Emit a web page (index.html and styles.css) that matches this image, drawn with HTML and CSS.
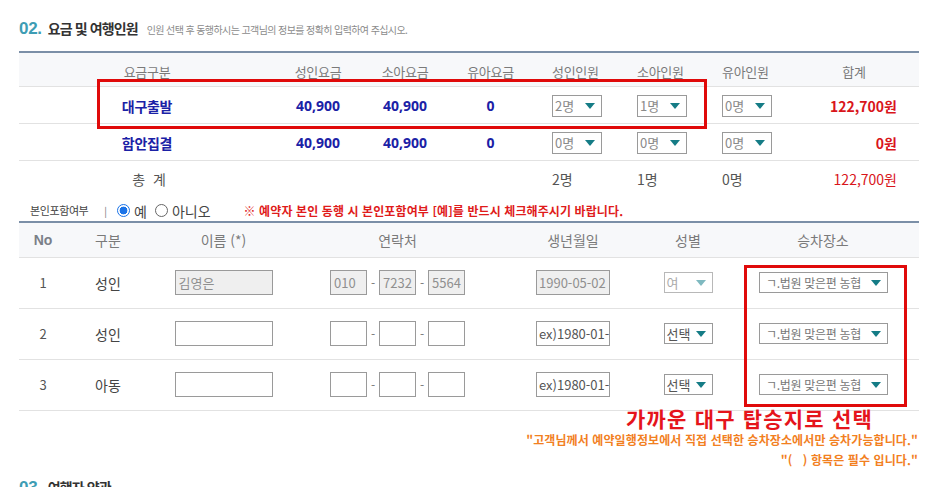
FILE: index.html
```html
<!DOCTYPE html>
<html lang="ko">
<head>
<meta charset="utf-8">
<title>요금 및 여행인원</title>
<link rel="stylesheet" href="styles.css">
</head>
<body>
<div class="page">
  <h2 class="sec-title"><span class="num">02.</span><span class="title">요금 및 여행인원</span><span class="sub">인원 선택 후 동행하시는 고객님의 정보를 정확히 입력하여 주십시오.</span></h2>

  <table class="fare">
    <colgroup>
      <col class="c1"><col class="c2"><col class="c3"><col class="c4"><col class="c5"><col class="c6"><col class="c7"><col class="c8">
    </colgroup>
    <thead>
      <tr>
        <th>요금구분</th><th>성인요금</th><th>소아요금</th><th>유아요금</th>
        <th class="lft">성인인원</th><th class="lft">소아인원</th><th class="lft">유아인원</th><th class="sum-h">합계</th>
      </tr>
    </thead>
    <tbody>
      <tr>
        <td class="name">대구출발</td><td class="price">40,900</td><td class="price">40,900</td><td class="price">0</td>
        <td class="lft"><div class="sel">2명<i class="tri"></i></div></td>
        <td class="lft"><div class="sel">1명<i class="tri"></i></div></td>
        <td class="lft"><div class="sel">0명<i class="tri"></i></div></td>
        <td class="total">122,700원</td>
      </tr>
      <tr>
        <td class="name">함안집결</td><td class="price">40,900</td><td class="price">40,900</td><td class="price">0</td>
        <td class="lft"><div class="sel">0명<i class="tri"></i></div></td>
        <td class="lft"><div class="sel">0명<i class="tri"></i></div></td>
        <td class="lft"><div class="sel">0명<i class="tri"></i></div></td>
        <td class="total">0원</td>
      </tr>
      <tr class="sumrow">
        <td class="sum-label">총 계</td><td></td><td></td><td></td>
        <td class="lft cnt">2명</td><td class="lft cnt">1명</td><td class="lft cnt">0명</td>
        <td class="total normal">122,700원</td>
      </tr>
    </tbody>
  </table>

  <div class="self-row">
    <span class="self-label">본인포함여부</span>
    <span class="bar">|</span>
    <label class="radio"><span class="rb on"></span>예</label>
    <label class="radio"><span class="rb"></span>아니오</label>
    <span class="warn">※ 예약자 본인 동행 시 본인포함여부 [예]를 반드시 체크해주시기 바랍니다.</span>
  </div>

  <table class="people">
    <colgroup>
      <col class="p1"><col class="p2"><col class="p3"><col class="p4"><col class="p5"><col class="p6"><col class="p7">
    </colgroup>
    <thead>
      <tr><th class="no">No</th><th>구분</th><th>이름 (*)</th><th>연락처</th><th>생년월일</th><th>성별</th><th>승차장소</th></tr>
    </thead>
    <tbody>
      <tr>
        <td>1</td><td class="kind">성인</td>
        <td><div class="inp name-inp dis">김영은</div></td>
        <td><div class="phone"><div class="inp ph dis">010</div><span class="dash">-</span><div class="inp ph dis">7232</div><span class="dash">-</span><div class="inp ph dis">5564</div></div></td>
        <td><div class="inp birth dis">1990-05-02</div></td>
        <td><div class="sel gender dis">여<i class="tri"></i></div></td>
        <td><div class="sel place">ㄱ.법원 맞은편 농협<i class="tri"></i></div></td>
      </tr>
      <tr>
        <td>2</td><td class="kind">성인</td>
        <td><div class="inp name-inp"></div></td>
        <td><div class="phone"><div class="inp ph"></div><span class="dash">-</span><div class="inp ph"></div><span class="dash">-</span><div class="inp ph"></div></div></td>
        <td><div class="inp birth">ex)1980-01-</div></td>
        <td><div class="sel gender">선택<i class="tri"></i></div></td>
        <td><div class="sel place">ㄱ.법원 맞은편 농협<i class="tri"></i></div></td>
      </tr>
      <tr>
        <td>3</td><td class="kind">아동</td>
        <td><div class="inp name-inp"></div></td>
        <td><div class="phone"><div class="inp ph"></div><span class="dash">-</span><div class="inp ph"></div><span class="dash">-</span><div class="inp ph"></div></div></td>
        <td><div class="inp birth">ex)1980-01-</div></td>
        <td><div class="sel gender">선택<i class="tri"></i></div></td>
        <td><div class="sel place">ㄱ.법원 맞은편 농협<i class="tri"></i></div></td>
      </tr>
    </tbody>
  </table>

  <div class="notes">
    <p class="note">"고객님께서 예약일행정보에서 직접 선택한 승차장소에서만 승차가능합니다."</p>
    <p class="note">"(&nbsp;&nbsp;&nbsp;) 항목은 필수 입니다."</p>
  </div>

  <h2 class="sec-title next"><span class="num">03.</span><span class="title">여행자 약관</span></h2>

  <div class="mark mark-1"></div>
  <div class="mark mark-2"></div>
  <div class="mark-text">가까운 대구 탑승지로 선택</div>
</div>
</body>
</html>
```

FILE: styles.css
```css
* { box-sizing: border-box; }
html, body { margin: 0; padding: 0; background: #fff; }
body {
  font-family: "Noto Sans CJK KR", "Noto Sans", sans-serif;
  color: #555;
  overflow: hidden;
}
.page {
  position: relative;
  width: 941px;
  height: 487px;
  padding: 0 22px 0 19px;
}

/* section title */
.sec-title {
  margin: 0;
  height: 51px;
  padding-top: 20px;
  display: flex;
  align-items: baseline;
  font-weight: normal;
  line-height: 1;
}
.sec-title .num {
  font-family: "Liberation Sans", sans-serif;
  font-weight: bold;
  font-size: 17px;
  color: #3e9db4;
  letter-spacing: -0.3px;
  margin-right: 6px;
}
.sec-title .title {
  font-weight: bold;
  font-size: 14px;
  color: #333;
  letter-spacing: -0.9px;
}
.sec-title .sub {
  margin-left: 9px;
  font-size: 10px;
  color: #8b8b8b;
  letter-spacing: -0.6px;
}
.sec-title.next { height: auto; padding-top: 0; margin-top: 13px; }

/* fare table */
table { border-collapse: collapse; width: 900px; table-layout: fixed; }
.fare { border-top: 2px solid #7b8fa7; }
.fare col.c1 { width: 256px; }
.fare col.c2 { width: 86px; }
.fare col.c3 { width: 88px; }
.fare col.c4 { width: 83px; }
.fare col.c5 { width: 85px; }
.fare col.c6 { width: 85px; }
.fare col.c7 { width: 95px; }
.fare col.c8 { width: 122px; }

.fare th {
  height: 34px;
  background: #f7f8fa;
  color: #7a7a7a;
  font-size: 13px;
  font-weight: normal;
  border-bottom: 1px solid #e2e2e2;
  padding: 4px 0 0;
  line-height: 1;
  letter-spacing: -0.3px;
}
.fare td {
  height: 37px;
  padding: 2px 0 0;
  text-align: center;
  font-size: 14px;
  line-height: 1;
  border-bottom: 1px solid #e2e2e2;
}
.fare th.lft, .fare td.lft { text-align: left; padding-left: 20px; }
.fare th.sum-h { padding-right: 8px; }
.fare td.name { font-weight: bold; color: #1b21a6; letter-spacing: -0.3px; }
.fare td.price { font-weight: bold; color: #1b21a6; font-family: "Noto Sans", sans-serif; }
.fare td.total {
  text-align: right;
  padding-right: 22px;
  font-weight: bold;
  color: #d9151b;
}
.fare td.total.normal { font-weight: normal; }
.fare tr.sumrow td { border-bottom: none; height: 36px; }
.fare td.sum-label { color: #555; letter-spacing: 2px; padding-left: 6px; }
.fare td.cnt { color: #555; }

/* fake selects */
.sel {
  position: relative;
  display: inline-flex;
  align-items: center;
  width: 50px;
  height: 22px;
  border: 1px solid #9a9a9a;
  background: #fff;
  padding-left: 2px;
  font-size: 13px;
  color: #8a8a8a;
  line-height: 1;
  vertical-align: middle;
}
.sel .tri {
  position: absolute;
  right: 6px;
  top: 50%;
  margin-top: -3px;
  width: 0; height: 0;
  border-left: 5px solid transparent;
  border-right: 5px solid transparent;
  border-top: 6px solid #157c86;
}

/* self include row */
.self-row {
  height: 25px;
  display: flex;
  align-items: center;
  padding-top: 4px;
  font-size: 13px;
  line-height: 1;
}
.self-label { font-size: 11px; color: #444; margin-left: 11px; letter-spacing: -0.4px; }
.bar { font-size: 10px; color: #777; margin: 0 10px 0 16px; }
.radio { display: inline-flex; align-items: center; color: #444; font-size: 14px; margin-right: 8px; }
.rb {
  width: 13px; height: 13px;
  border-radius: 50%;
  border: 1px solid #666;
  margin-right: 4px;
  background: #fff;
}
.rb.on {
  border: 1.5px solid #1a73e8;
  background: radial-gradient(circle, #1a73e8 0 3.6px, #fff 4.2px);
}
.warn {
  margin-left: 25px;
  color: #e01b1b;
  font-weight: bold;
  font-size: 12px;
  letter-spacing: 0.1px;
}

/* people table */
.people { border-top: 2px solid #7b8fa7; }
.people col.p1 { width: 48px; }
.people col.p2 { width: 82px; }
.people col.p3 { width: 149px; }
.people col.p4 { width: 199px; }
.people col.p5 { width: 152px; }
.people col.p6 { width: 78px; }
.people col.p7 { width: 192px; }
.people th {
  height: 35px;
  background: #f7f8fa;
  color: #7a7a7a;
  font-size: 14px;
  font-weight: normal;
  border-bottom: 1px solid #e2e2e2;
  padding: 0;
  line-height: 1;
}
.people th.no { font-weight: bold; font-family: "Liberation Sans", sans-serif; color: #7a7f88; }
.people td {
  height: 51px;
  padding: 0;
  text-align: center;
  font-size: 13px;
  color: #555;
  border-bottom: 1px solid #e2e2e2;
  line-height: 1;
}
.people td.kind { font-size: 14px; color: #444; }

.inp {
  display: inline-flex;
  align-items: center;
  height: 25px;
  border: 1px solid #9a9a9a;
  background: #fff;
  padding-left: 3px;
  font-size: 13px;
  color: #555;
  vertical-align: middle;
  overflow: hidden;
  white-space: nowrap;
}
.inp.dis { background: #efefef; color: #8f8f8f; }
.name-inp { width: 98px; }
.phone { display: inline-flex; align-items: center; vertical-align: middle; }
.ph { width: 37px; }
.dash { width: 12px; text-align: center; font-size: 12px; color: #777; }
.birth { width: 74px; padding-left: 2px; }
.sel.gender { width: 49px; height: 21px; font-size: 13px; color: #555; }
.sel.gender.dis { color: #aaa; border-color: #b8b8b8; }
.sel.gender.dis .tri { border-top-color: #7fb9c0; }
.sel.place {
  width: 129px;
  height: 21px;
  font-size: 12px;
  color: #777;
  padding-left: 6px;
  letter-spacing: -0.3px;
  margin-left: 1px;
}

/* notes */
.notes { text-align: right; padding-right: 1px; margin-top: 22px; }
.note {
  margin: 0 0 7px;
  color: #f2801f;
  font-weight: bold;
  font-size: 12px;
  line-height: 13px;
  letter-spacing: 0.1px;
}

/* annotation overlays */
.mark { position: absolute; border: 3px solid #e00a0a; }
.mark-1 { left: 97px; top: 79px; width: 610px; height: 50px; }
.mark-2 { left: 744px; top: 265px; width: 163px; height: 142px; }
.mark-text {
  position: absolute;
  left: 626px;
  top: 408px;
  font-size: 21px;
  font-weight: bold;
  color: #e5141b;
  letter-spacing: 1.2px;
  line-height: 1;
}
```
